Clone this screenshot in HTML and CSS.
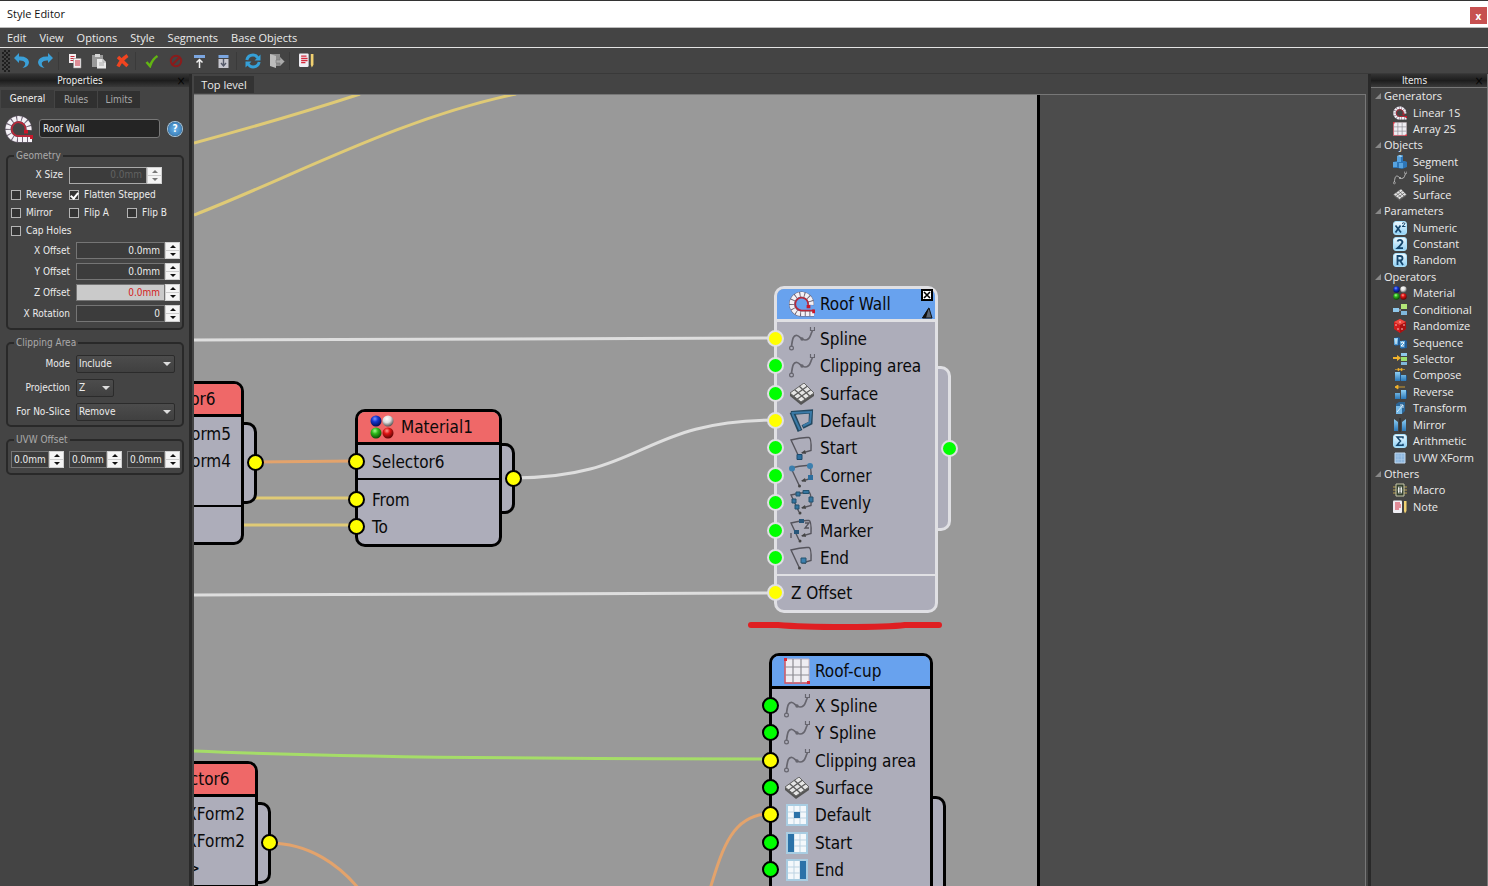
FILE: index.html
```html
<!DOCTYPE html>
<html lang="en">
<head>
<meta charset="utf-8">
<title>Style Editor</title>
<link rel="stylesheet" href="styles.css">
</head>
<body>
<svg class="defs" aria-hidden="true">
  <defs>
    <linearGradient id="gBlue" x1="0" y1="0" x2="0" y2="1"><stop offset="0" stop-color="#8fd0f5"/><stop offset="1" stop-color="#2b78b8"/></linearGradient>
    <linearGradient id="gPale" x1="0" y1="0" x2="0" y2="1"><stop offset="0" stop-color="#f2fbff"/><stop offset="1" stop-color="#8fd0f5"/></linearGradient>
    <radialGradient id="bB" cx=".4" cy=".3" r=".7"><stop offset="0" stop-color="#7d95ff"/><stop offset=".4" stop-color="#1335d0"/><stop offset="1" stop-color="#050c50"/></radialGradient>
    <radialGradient id="bW" cx=".4" cy=".3" r=".7"><stop offset="0" stop-color="#fff"/><stop offset=".5" stop-color="#ddd"/><stop offset="1" stop-color="#555"/></radialGradient>
    <radialGradient id="bG" cx=".4" cy=".3" r=".7"><stop offset="0" stop-color="#a5ff90"/><stop offset=".4" stop-color="#2eb81a"/><stop offset="1" stop-color="#0b4a05"/></radialGradient>
    <radialGradient id="bR" cx=".4" cy=".3" r=".7"><stop offset="0" stop-color="#ff9c90"/><stop offset=".4" stop-color="#e01414"/><stop offset="1" stop-color="#5c0404"/></radialGradient>
    <symbol id="linear" viewBox="0 0 28 28">
      <path d="M27 24.500H12A10.500 10.500 0 1 1 24 15" fill="none" stroke="#6d6272" stroke-width="6"/>
      <path d="M27 24.500H12A10.500 10.500 0 1 1 24 15" fill="none" stroke="#f4f1f6" stroke-width="5" stroke-dasharray="4 1"/>
      <path d="M27 21H13.500A6.900 6.900 0 1 1 20.500 15" fill="none" stroke="#b8283a" stroke-width="1.800"/>
      <path d="M19 15h4v3.500h-4zM25 20h3v4h-3z" fill="#c8182a"/>
    </symbol>
    <symbol id="array" viewBox="0 0 26 26">
      <path d="M1 1H25V25H1z" fill="#efedf2" stroke="#c8b4bc"/><path d="M1 1V25H25" fill="none" stroke="#d05060" stroke-width="1.400"/>
      <path d="M9 1V25M17 1V25M1 9H25M1 17H25" stroke="#8d8b92" stroke-width="1.200"/>
      <path d="M0 0h3v3H0zM23 23h3v3h-3z" fill="#dc2c3a"/>
    </symbol>
    <symbol id="spline" viewBox="0 0 26 24">
      <path d="M2.500 19.500C3.500 11 4.500 8 8 8.500C11 9 12 13 16 13C22 13 21 7 23.500 4" fill="none" stroke="currentColor" stroke-width="1.700"/>
      <circle cx="2.500" cy="21" r="1.900" fill="none" stroke="currentColor" stroke-width="1.200"/><path d="M21.500 0v3.500h4V0" fill="none" stroke="currentColor" stroke-width="1.200"/><circle cx="13" cy="12" r="1.700" fill="currentColor"/>
    </symbol>
    <symbol id="surface" viewBox="0 0 26 22">
      <path d="M1 10L15 1L25 11V13L12 22L1 13z" fill="#555"/><path d="M1 10L15 0L25 10L12 19z" fill="#e5e5e5" stroke="#666"/>
      <path d="M5.700 6.700L16.300 16M10.300 3.300L20.700 13M4.700 13L18.300 3.300M8.300 16L21.700 6.700" stroke="#5c5c5c" stroke-width="1.300"/>
    </symbol>
    <symbol id="pDefault" viewBox="0 0 26 26"><path d="M2 5L22 3.500L21.500 15L13.500 19" fill="none" stroke="#234860" stroke-width="4"/><path d="M3 4L11 23" stroke="#234860" stroke-width="5"/><path d="M2.500 5L22 4L21 14.500L14 18M3.500 6L11 22" fill="none" stroke="#3b7ba8" stroke-width="2"/></symbol>
    <symbol id="pBase" viewBox="0 0 26 26"><path d="M10 22L2 5Q12 2 20 2.500Q22.500 3 22 15.500L13 18" fill="none" stroke="#55545c" stroke-width="1.400"/><path d="M16 15L12 18L17 19z" fill="#444"/></symbol>
    <symbol id="pStart" viewBox="0 0 26 26"><use href="#pBase"/><path d="M8 19.500h5v5H8z" fill="#2c6e9e" stroke="#1c4a6c"/></symbol>
    <symbol id="pCorner" viewBox="0 0 26 26"><use href="#pBase"/><circle cx="3" cy="5.500" r="3" fill="#3b7fae"/><circle cx="21" cy="3" r="3" fill="#3b7fae"/><path d="M19 12h5v5h-5z" fill="#2c6e9e"/><circle cx="10.500" cy="23" r="1.500" fill="#444"/></symbol>
    <symbol id="pEvenly" viewBox="0 0 26 26"><use href="#pBase"/><g fill="#35759f" stroke="#25536f"><path d="M7 2h4v4H7zM14 .5h6v3h-6zM20 7h4v5h-4zM3 9h4v4H3zM6 15h4v4H6z"/></g><circle cx="11" cy="23" r="1.500" fill="#444"/></symbol>
    <symbol id="pMarker" viewBox="0 0 26 26"><use href="#pBase"/><path d="M10 1h5v4h-5zM5 12h5v4H5z" fill="#28567a"/><path d="M2 15V20M16 5h4l-4 5h4" fill="none" stroke="#55545c" stroke-width="1.300"/><circle cx="11" cy="23" r="1.500" fill="#444"/></symbol>
    <symbol id="pEnd" viewBox="0 0 26 26"><use href="#pBase"/><path d="M12 13h5v5h-5z" fill="#3b7fae" stroke="#25536f"/><circle cx="10.500" cy="23" r="1.500" fill="#444"/></symbol>
    <symbol id="gBase" viewBox="0 0 22 22"><path d="M1 1H21V21H1z" fill="#f4f8fb" stroke="#a9cde2" stroke-width="2"/><path d="M8 2V20M14 2V20M2 8H20M2 14H20" stroke="#bdd3e2"/></symbol>
    <symbol id="cDefault" viewBox="0 0 22 22"><use href="#gBase"/><path d="M8 8h6v6H8z" fill="#2b72a8"/></symbol>
    <symbol id="cStart" viewBox="0 0 22 22"><use href="#gBase"/><path d="M2 2h6v18H2z" fill="#2b72a8"/></symbol>
    <symbol id="cEnd" viewBox="0 0 22 22"><use href="#gBase"/><path d="M14 2h6v18h-6z" fill="#2b72a8"/></symbol>
    <symbol id="balls" viewBox="0 0 24 24"><circle cx="6" cy="6" r="5.500" fill="url(#bB)"/><circle cx="18" cy="6" r="5.500" fill="url(#bW)"/><circle cx="6" cy="18" r="5.500" fill="url(#bG)"/><circle cx="18" cy="18" r="5.500" fill="url(#bR)"/></symbol>
    <symbol id="segment" viewBox="0 0 14 14"><path d="M4 1l6-1v6h2l2 1v5l-5 2-4-1-5 0V7l4-1z" fill="#2d76b8"/><path d="M4 1l4 1v5H4zM0 7h4v5H0zM6 8h4v5H6z" fill="#58a4e0"/><path d="M4 1l3-1 3 1-2 1z" fill="#a8daf8"/></symbol>
    <symbol id="badge" viewBox="0 0 14 14"><rect x=".5" y=".5" width="13" height="13" rx="2.500" fill="url(#gPale)" stroke="#a8e0fa"/></symbol>
    <symbol id="numeric" viewBox="0 0 14 14"><use href="#badge"/><path d="M2.500 4.500L8 11.500M7.500 4.500L2.500 11.500" stroke="#15466c" stroke-width="1.700"/><path d="M9 2.500q2-1.500 3 0q0 1-3 3h3.500" fill="none" stroke="#15466c"/></symbol>
    <symbol id="constant" viewBox="0 0 14 14"><use href="#badge"/><path d="M4.500 4.500Q5 2.800 7 2.800T9.500 5Q9 7 4.500 11.200H10" fill="none" stroke="#15466c" stroke-width="1.800"/></symbol>
    <symbol id="random" viewBox="0 0 14 14"><use href="#badge"/><path d="M4.500 12V3H7Q9.500 3 9.500 5.200T7 7.500H4.500M7 7.500L10 12" fill="none" stroke="#15466c" stroke-width="1.800"/></symbol>
    <symbol id="sigma" viewBox="0 0 14 14"><use href="#badge"/><path d="M10 4.500V3H4L7.500 7L4 11.200H10V9.700" fill="none" stroke="#15466c" stroke-width="1.500"/></symbol>
    <symbol id="conditional" viewBox="0 0 14 14"><path d="M0 5h6v4H0z" fill="#8fc8ec"/><path d="M8 1h6v5H8z" fill="#b2e678"/><path d="M8 8h6v4H8z" fill="#7fb8dc"/><path d="M6 7h2" stroke="#ccc"/></symbol>
    <symbol id="dice" viewBox="0 0 14 14"><path d="M7 0l6 3v7l-6 4-6-4V3z" fill="#d01c1c"/><path d="M7 0l6 3-6 3-6-3z" fill="#f04a40"/><path d="M7 6v8l6-4V3z" fill="#a81010"/><g fill="#ffd0cc"><circle cx="7" cy="3" r=".8"/><circle cx="3" cy="6" r=".8"/><circle cx="5" cy="10" r=".8"/><circle cx="9" cy="10" r=".8"/><circle cx="11" cy="6" r=".8"/></g></symbol>
    <symbol id="sequence" viewBox="0 0 14 14"><path d="M1 2l4-1 2 1v7l-5 1zM7 5l5-1 2 1v7l-6 1z" fill="#225c98"/><path d="M1 2h4v7H1zM7 5h5v7H7z" fill="url(#gBlue)"/><path d="M3 3v5M8 7q2-2 3 0l-3 3h3" fill="none" stroke="#fff"/></symbol>
    <symbol id="selector" viewBox="0 0 14 14"><path d="M8 1h6v3H8z" fill="#8fc8ec"/><path d="M8 5h6v4H8z" fill="#9be06e"/><path d="M8 10h6v3H8z" fill="#7fb8dc"/><path d="M0 5h4V3l4 3-4 3V7H0z" fill="#f2b32c"/></symbol>
    <symbol id="compose" viewBox="0 0 14 14"><path d="M2 4h5v9H2zM8 7h5v6H8z" fill="url(#gBlue)"/><path d="M7 4l1 1v7l-1 1zM13 7l1 1v4l-1 1z" fill="#1d5690"/><path d="M2 1.500h4M8 1.500h4M5 0l2 1.500L5 3zM9 0L7 1.500 9 3z" fill="#f2b32c" stroke="#f2b32c" stroke-width=".6"/></symbol>
    <symbol id="reverse" viewBox="0 0 14 14"><path d="M2 8h5v6H2zM8 5h5v9H8z" fill="url(#gBlue)"/><path d="M13 5l1 1v7l-1 1z" fill="#1d5690"/><path d="M2 2h10M5 0L2 2l3 2z" fill="#f2b32c" stroke="#f2b32c" stroke-width=".8"/></symbol>
    <symbol id="transform" viewBox="0 0 14 14"><path d="M3 3l3-2h6v9l-3 3H3z" fill="#2b6596"/><path d="M3 5h6v8H3z" fill="#75b8e6"/><path d="M4 11l6-7M10 4H7M10 4v3" stroke="#d8ecfa" fill="none"/></symbol>
    <symbol id="mirror" viewBox="0 0 14 14"><path d="M1 1l4 3v9H1z" fill="url(#gBlue)"/><path d="M13 1L9 4v9h4z" fill="url(#gBlue)"/><path d="M7 0v14" stroke="#252525"/></symbol>
    <symbol id="uvw" viewBox="0 0 14 14"><path d="M2 2h10v10H2z" fill="#8db6dd" stroke="#c3daf0"/><path d="M2 5h10M2 8.500h10M5 2v10M8.500 2v10" stroke="#a9cae8" stroke-width=".6"/></symbol>
    <symbol id="macro" viewBox="0 0 14 14"><path d="M0 4h14M0 7h14M0 10h14" stroke="#b9a04c"/><path d="M3 1h8v12H3z" fill="#344030" stroke="#c8c8a8"/><path d="M6 3.500q-1.500 3.500 0 7M8 3.500q1.500 3.500 0 7M7 5v4" fill="none" stroke="#fff"/></symbol>
    <symbol id="note" viewBox="0 0 14 14"><rect y=".5" width="9" height="12.500" rx="1" fill="#f0eef4"/><path d="M2 3h5M2 5h6M2 7h6M2 9h4" stroke="#d42a3c" stroke-width="1.200"/><path d="M11 1h2.500v10L12 13.500 11 11z" fill="#f0d070"/></symbol>
  </defs>
</svg>

<header class="titlebar"><h1>Style Editor</h1><button class="winclose" aria-label="Close window">x</button></header>
<nav class="menubar"><button>Edit</button><button>View</button><button>Options</button><button>Style</button><button>Segments</button><button>Base Objects</button></nav>
<div class="toolbar">
  <span class="grip"></span>
  <button aria-label="Undo"><svg width="16" height="16" viewBox="0 0 16 16"><path d="M0 5L5 0V3.500Q14 3 15 9Q15 14 8.500 15Q12 12 11 9.500Q9.500 7 5 7.500V10z" fill="#3ba0d8"/></svg></button>
  <button aria-label="Redo"><svg width="16" height="16" viewBox="0 0 16 16"><path d="M15 5L10 0V3.500Q1 3 0 9Q0 14 6.500 15Q3 12 4 9.500Q5.500 7 10 7.500V10z" fill="#3ba0d8"/></svg></button>
  <i class="sep"></i>
  <button aria-label="Copy"><svg width="16" height="16" viewBox="0 0 16 16"><path d="M2 1h7v9H2z" fill="#f4eef0"/><path d="M3.500 3.500h4M3.500 5.500h4M3.500 7.500h4" stroke="#c82c3c"/><path d="M6.500 5.500h7.500v9.500H6.500z" fill="#f4eef0" stroke="#999" stroke-width=".6"/><path d="M8 8h5M8 10h5M8 12h5" stroke="#c82c3c"/></svg></button>
  <button aria-label="Paste"><svg width="16" height="16" viewBox="0 0 16 16"><path d="M1 2h11v12H1z" fill="#999"/><path d="M4 1h5v3H4z" fill="#d6d6d6"/><path d="M6 6h6l3 3v6.500H6z" fill="#e8e8e8"/><path d="M12 6v3h3M8 10h5M8 12h5" stroke="#aaa" fill="none"/></svg></button>
  <button aria-label="Delete"><svg width="14" height="14" viewBox="0 0 14 14"><path d="M2 3L11.500 12M11.500 1.500Q5 6 2 12.500" stroke="#f04420" stroke-width="3.400" fill="none"/></svg></button>
  <i class="sep"></i>
  <button aria-label="Apply"><svg width="14" height="14" viewBox="0 0 14 14"><path d="M1.500 8L5 12Q7.500 5 12.500 2" stroke="#62b512" stroke-width="2.600" fill="none"/></svg></button>
  <button aria-label="Cancel"><svg width="14" height="14" viewBox="0 0 14 14"><circle cx="7" cy="7" r="5.200" fill="none" stroke="#8a1c1c" stroke-width="2"/><path d="M3.500 10.500L10.500 3.500" stroke="#8a1c1c" stroke-width="2"/></svg></button>
  <button aria-label="Import"><svg width="14" height="14" viewBox="0 0 14 14"><path d="M1 1h11v3H1z" fill="#7ba6e0"/><path d="M6.500 14V6M3.500 8.500L6.500 5.500L9.500 8.500" fill="none" stroke="#eee" stroke-width="1.500"/></svg></button>
  <button aria-label="Export"><svg width="14" height="14" viewBox="0 0 14 14"><path d="M1.500 1h10v3h-10z" fill="#7ba6e0"/><path d="M1.500 5h10v9h-10z" fill="#c8c8d0"/><path d="M6.500 5V11M4 9L6.500 12L9 9" fill="none" stroke="#555a6a" stroke-width="1.400"/></svg></button>
  <i class="sep"></i>
  <button aria-label="Refresh"><svg width="16" height="16" viewBox="0 0 16 16"><path d="M1.800 7Q3 2 8 2Q11 2 13 5M14.200 9Q13 14 8 14Q5 14 3 11" fill="none" stroke="#35a0d8" stroke-width="3"/><path d="M15.500 1.500V7.500H9.500zM.5 14.500V8.500H6.500z" fill="#35a0d8"/></svg></button>
  <button aria-label="Exit"><svg width="16" height="16" viewBox="0 0 16 16"><path d="M1 1h10v12H1z" fill="#8c8c8c"/><path d="M1 1l6 2v12L1 13z" fill="#bcbcbc"/><path d="M7 7h4V4l4.500 4.500L11 13v-3H7z" fill="#aaa" stroke="#777" stroke-width=".6"/></svg></button>
  <i class="sep"></i>
  <button aria-label="Note"><svg width="15" height="15"><use href="#note"/></svg></button>
</div>

<main class="workspace">
  <aside class="dock properties">
    <header class="dockhead"><h2>Properties</h2><button aria-label="Close properties">×</button></header>
    <div class="tabs"><button class="on">General</button><button>Rules</button><button>Limits</button></div>
    <div class="namerow">
      <svg width="28" height="28"><use href="#linear"/></svg>
      <input type="text" aria-label="Name" value="Roof Wall">
      <button class="help" aria-label="Help">?</button>
    </div>
    <fieldset class="geometry">
      <legend>Geometry</legend>
      <div class="field xsize"><label for="xs">X Size</label><span class="spin off"><input id="xs" type="text" value="0.0mm" disabled><span class="steps"><button aria-label="Up"></button><button aria-label="Down"></button></span></span></div>
      <div class="checks">
        <label><input type="checkbox">Reverse</label><label class="wide"><input type="checkbox" checked>Flatten Stepped</label>
        <label><input type="checkbox">Mirror</label><label><input type="checkbox">Flip A</label><label><input type="checkbox">Flip B</label>
        <label><input type="checkbox">Cap Holes</label>
      </div>
      <div class="field"><label for="xo">X Offset</label><span class="spin"><input id="xo" type="text" value="0.0mm"><span class="steps"><button aria-label="Up"></button><button aria-label="Down"></button></span></span></div>
      <div class="field"><label for="yo">Y Offset</label><span class="spin"><input id="yo" type="text" value="0.0mm"><span class="steps"><button aria-label="Up"></button><button aria-label="Down"></button></span></span></div>
      <div class="field"><label for="zo">Z Offset</label><span class="spin driven"><input id="zo" type="text" value="0.0mm"><span class="steps"><button aria-label="Up"></button><button aria-label="Down"></button></span></span></div>
      <div class="field"><label for="xr">X Rotation</label><span class="spin"><input id="xr" type="text" value="0"><span class="steps"><button aria-label="Up"></button><button aria-label="Down"></button></span></span></div>
    </fieldset>
    <fieldset class="clip">
      <legend>Clipping Area</legend>
      <div class="field"><label for="mode">Mode</label><span class="drop"><select id="mode"><option>Include</option></select></span></div>
      <div class="field"><label for="proj">Projection</label><span class="drop short"><select id="proj"><option>Z</option></select></span></div>
      <div class="field"><label for="slice">For No-Slice</label><span class="drop"><select id="slice"><option>Remove</option></select></span></div>
    </fieldset>
    <fieldset>
      <legend>UVW Offset</legend>
      <div class="uvwrow">
        <span class="spin"><input type="text" aria-label="U offset" value="0.0mm"><span class="steps"><button aria-label="Up"></button><button aria-label="Down"></button></span></span>
        <span class="spin"><input type="text" aria-label="V offset" value="0.0mm"><span class="steps"><button aria-label="Up"></button><button aria-label="Down"></button></span></span>
        <span class="spin"><input type="text" aria-label="W offset" value="0.0mm"><span class="steps"><button aria-label="Up"></button><button aria-label="Down"></button></span></span>
      </div>
    </fieldset>
  </aside>

  <section class="graph">
    <div class="leveltabs"><button>Top level</button></div>
    <div class="canvas">
      <div class="sheet"></div>
      <svg class="wires" width="860" height="792" viewBox="194 95 860 792" fill="none" stroke-width="3">
        <g stroke="#dfca76"><path d="M194 143Q290 117 360 94"/><path d="M194 215C290 178 400 118 516 94"/><path d="M250 498H356M240 525H356"/></g>
        <g stroke="#dedede"><path d="M194 340L776 338"/><path d="M513 478C645 478 640 420 776 420"/><path d="M194 595L776 593"/></g>
        <g stroke="#e3a36c"><path d="M255 462L356 461"/><path d="M269 843C310 843 340 866 359 889"/><path d="M710 889C722 850 732 814 770 814"/></g>
        <path d="M194 751C340 757 560 759 770 759" stroke="#a5dd68"/>
        <path d="M751 625H778Q800 627 845 627T905 625H939" stroke="#df1f22" stroke-width="6" stroke-linecap="round"/>
      </svg>

      <article class="node red sel-a">
        <span class="bracket"><b class="port y"></b></span>
        <h3><span>Selector6</span></h3>
        <ul class="rows right"><li>UVW XForm5</li><li>UVW XForm4</li><li class="none">&lt;none&gt;</li></ul>
        <ul class="rows extra"><li>Selector</li></ul>
      </article>

      <article class="node red sel-b">
        <span class="bracket"><b class="port y"></b></span>
        <h3><span>Selector6</span></h3>
        <ul class="rows right"><li>UVW XForm2</li><li>UVW XForm2</li><li class="none">&lt;none&gt;</li></ul>
        <ul class="rows extra"><li>Selector</li></ul>
      </article>

      <article class="node red material">
        <span class="bracket"><b class="port y"></b></span>
        <h3><svg width="24" height="24"><use href="#balls"/></svg><span>Material1</span></h3>
        <ul class="rows one"><li><b class="port y"></b>Selector6</li></ul>
        <ul class="rows extra"><li><b class="port y"></b>From</li><li><b class="port y"></b>To</li></ul>
      </article>

      <article class="node blue picked roofwall">
        <span class="bracket"><b class="port"></b></span>
        <h3><svg width="26" height="26"><use href="#linear"/></svg><span>Roof Wall</span></h3>
        <svg class="corner" width="12" height="32" viewBox="0 0 12 32"><path d="M1 2h10v10H1z" fill="#fff" stroke="#000" stroke-width="2"/><path d="M3 4l6 6M9 4l-6 6" stroke="#000" stroke-width="1.600"/><path d="M1.500 30H11L8 20z" fill="#5a6472" stroke="#111"/><path d="M1 30L8 19L5 30z" fill="#111"/></svg>
        <ul class="rows list">
          <li><b class="port y"></b><svg width="26" height="24"><use href="#spline"/></svg>Spline</li>
          <li><b class="port"></b><svg width="26" height="24"><use href="#spline"/></svg>Clipping area</li>
          <li><b class="port"></b><svg width="26" height="22"><use href="#surface"/></svg>Surface</li>
          <li><b class="port y"></b><svg width="26" height="26"><use href="#pDefault"/></svg>Default</li>
          <li><b class="port"></b><svg width="26" height="26"><use href="#pStart"/></svg>Start</li>
          <li><b class="port"></b><svg width="26" height="26"><use href="#pCorner"/></svg>Corner</li>
          <li><b class="port"></b><svg width="26" height="26"><use href="#pEvenly"/></svg>Evenly</li>
          <li><b class="port"></b><svg width="26" height="26"><use href="#pMarker"/></svg>Marker</li>
          <li><b class="port"></b><svg width="26" height="26"><use href="#pEnd"/></svg>End</li>
        </ul>
        <ul class="rows extra"><li><b class="port y"></b>Z Offset</li></ul>
      </article>

      <article class="node blue roofcup">
        <span class="bracket"></span>
        <h3><svg width="26" height="26"><use href="#array"/></svg><span>Roof-cup</span></h3>
        <ul class="rows list">
          <li><b class="port"></b><svg width="26" height="24"><use href="#spline"/></svg>X Spline</li>
          <li><b class="port"></b><svg width="26" height="24"><use href="#spline"/></svg>Y Spline</li>
          <li><b class="port y"></b><svg width="26" height="24"><use href="#spline"/></svg>Clipping area</li>
          <li><b class="port"></b><svg width="26" height="22"><use href="#surface"/></svg>Surface</li>
          <li><b class="port y"></b><svg width="26" height="22"><use href="#cDefault"/></svg>Default</li>
          <li><b class="port"></b><svg width="26" height="22"><use href="#cStart"/></svg>Start</li>
          <li><b class="port"></b><svg width="26" height="22"><use href="#cEnd"/></svg>End</li>
          <li><svg width="26" height="22"><use href="#gBase"/></svg></li>
          <li></li>
        </ul>
      </article>
    </div>
  </section>

  <aside class="dock items">
    <header class="dockhead"><h2>Items</h2><button aria-label="Close items">×</button></header>
    <ul class="tree">
      <li class="group">Generators</li>
      <li><svg width="14" height="14"><use href="#linear"/></svg>Linear 1S</li>
      <li><svg width="14" height="14"><use href="#array"/></svg>Array 2S</li>
      <li class="group">Objects</li>
      <li><svg width="14" height="14"><use href="#segment"/></svg>Segment</li>
      <li><svg width="14" height="14"><use href="#spline"/></svg>Spline</li>
      <li><svg width="14" height="14"><use href="#surface"/></svg>Surface</li>
      <li class="group">Parameters</li>
      <li><svg width="14" height="14"><use href="#numeric"/></svg>Numeric</li>
      <li><svg width="14" height="14"><use href="#constant"/></svg>Constant</li>
      <li><svg width="14" height="14"><use href="#random"/></svg>Random</li>
      <li class="group">Operators</li>
      <li><svg width="14" height="14"><use href="#balls"/></svg>Material</li>
      <li><svg width="14" height="14"><use href="#conditional"/></svg>Conditional</li>
      <li><svg width="14" height="14"><use href="#dice"/></svg>Randomize</li>
      <li><svg width="14" height="14"><use href="#sequence"/></svg>Sequence</li>
      <li><svg width="14" height="14"><use href="#selector"/></svg>Selector</li>
      <li><svg width="14" height="14"><use href="#compose"/></svg>Compose</li>
      <li><svg width="14" height="14"><use href="#reverse"/></svg>Reverse</li>
      <li><svg width="14" height="14"><use href="#transform"/></svg>Transform</li>
      <li><svg width="14" height="14"><use href="#mirror"/></svg>Mirror</li>
      <li><svg width="14" height="14"><use href="#sigma"/></svg>Arithmetic</li>
      <li><svg width="14" height="14"><use href="#uvw"/></svg>UVW XForm</li>
      <li class="group">Others</li>
      <li><svg width="14" height="14"><use href="#macro"/></svg>Macro</li>
      <li><svg width="14" height="14"><use href="#note"/></svg>Note</li>
    </ul>
  </aside>
</main>
</body>
</html>
```
FILE: styles.css
```css
* { box-sizing: border-box; }
body {
  margin: 0; height: 100vh; overflow: hidden;
  display: flex; flex-direction: column;
  background: #444; color: #ececec;
  font: 11px/16px "Open Sans", "Noto Sans", sans-serif;
}
button, input, select { font: inherit; color: inherit; margin: 0; padding: 0; border: 0; background: none; border-radius: 0; }
h1, h2, h3, ul { margin: 0; padding: 0; font: inherit; list-style: none; }
.defs { position: absolute; width: 0; height: 0; }

.titlebar { display: flex; align-items: center; justify-content: space-between; height: 28px; padding: 0 1px 0 7px; background: #fff; color: #111; border-top: 1px solid #333; border-bottom: 1px solid #bbb; }
.winclose { width: 17px; height: 17px; margin-top: 3px; background: #c75050; color: #fff; line-height: 14px; font-weight: 700; font-size: 10px; }
.menubar { display: flex; gap: 13px; height: 20px; padding: 0 7px; border-bottom: 1px solid #e4e4e4; }
.toolbar { display: flex; align-items: center; height: 26px; padding-left: 2px; border-bottom: 1px solid #393939; }
.toolbar button { width: 24px; height: 24px; display: grid; place-items: center; }
.grip { width: 8px; height: 22px; background: repeating-conic-gradient(#1f1f1f 0 25%, #444 0 50%) 0 0 / 4px 4px; }
.sep { width: 5px; height: 18px; border-left: 1px solid #3a3a3a; }

.workspace { flex: 1; min-height: 0; display: flex; }
.dock { display: flex; flex-direction: column; background: #444; }
.properties { width: 192px; border-right: 3px solid #292929; font: 10px/14px "DejaVu Sans Condensed", "DejaVu Sans", sans-serif; }
.items { width: 120px; border-left: 3px solid #292929; border-right: 1px solid #777; }
.dockhead { display: flex; align-items: center; height: 13px; background: linear-gradient(#333, #1d1d1d 50%, #3a3a3a); font: 10px/12px "DejaVu Sans Condensed", "DejaVu Sans", sans-serif; }
.dockhead h2 { flex: 1; padding-right: 13px; text-align: center; }
.dockhead button { width: 16px; color: #050505; font-size: 12px; line-height: 12px; }

.tabs { display: flex; gap: 1px; height: 19px; margin: 2px 1px 0; align-items: end; }
.tabs button { width: 42px; height: 17px; background: #303030; color: #a8a8a8; }
.tabs .on { width: 53px; height: 18px; background: #393939; color: #f2f2f2; }
.namerow { display: flex; align-items: center; height: 41px; padding: 0 5px; }
.namerow input { width: 121px; height: 19px; margin-left: 6px; padding: 0 3px; background: #242424; border: 1px solid #777; border-radius: 3px; }
.help { width: 14px; height: 14px; margin-left: 8px; border-radius: 50%; background: radial-gradient(#6cb4ea, #286ca8); box-shadow: 0 0 0 1px #a8c8e0; color: #fff; font-weight: 700; line-height: 14px; }

fieldset { min-width: 0; margin: 0 5px 6px 6px; padding: 2px 2px 3px 3px; border: 2px solid #292929; border-radius: 5px; }
legend { margin-left: 3px; padding: 0 2px; color: #aaa; }
.geometry { padding-top: 3px; padding-bottom: 4px; }
.field { display: flex; align-items: center; gap: 6px; height: 21px; }
.field > label { width: 59px; text-align: right; white-space: nowrap; }
.xsize { height: 20px; padding-bottom: 2px; }
.xsize > label { width: 52px; }
.spin { display: flex; width: 104px; height: 17px; }
.xsize .spin { width: 93px; }
.spin input { flex: 1; min-width: 0; padding-right: 4px; border: 1px solid #757575; background: #3c3c3c; text-align: right; }
.spin.off input { border-color: #aaa; color: #626262; }
.spin.driven input { background: #cacaca; color: #d42020; }
.steps { display: flex; flex-direction: column; width: 15px; background: #f4f4f4; border: 1px solid #d0d0d0; }
.steps button { flex: 1; display: grid; place-items: center; min-height: 0; }
.steps button::before { content: ""; border: 3px solid transparent; border-top-width: 0; border-bottom: 3px solid #111; }
.steps button + button { border-top: 1px solid #ccc; }
.steps button + button::before { border-bottom-width: 0; border-top: 3px solid #111; }
.off .steps button::before { border-bottom-color: #777; }
.off .steps button + button::before { border-top-color: #777; }
.checks { display: grid; grid-template-columns: 58px 58px 1fr; grid-auto-rows: 18px; }
.checks .wide { grid-column: span 2; }
.checks label { display: flex; align-items: center; gap: 5px; white-space: nowrap; }
.checks input { appearance: none; flex: none; width: 10px; height: 10px; border: 1px solid #b4b4b4; background: #333; display: grid; place-items: center; }
.checks input:checked::before { content: ""; width: 3px; height: 6px; margin-bottom: 2px; border: solid #fff; border-width: 0 2px 2px 0; transform: rotate(40deg); }
.clip { padding-bottom: 1px; }
.clip .field { height: 23px; margin-bottom: 1px; }
.drop { position: relative; width: 99px; }
.drop.short { width: 38px; }
.drop select { appearance: none; display: block; width: 100%; height: 18px; padding-left: 2px; background: linear-gradient(#4c4c4c, #404040); border: 1px solid #2b2b2b; border-radius: 2px; }
.drop::after { content: ""; position: absolute; right: 4px; top: 7px; border: 4px solid transparent; border-top-color: #ddd; border-bottom-width: 0; pointer-events: none; }
.uvwrow { display: flex; gap: 5px; padding: 2px 0; }
.uvwrow .spin { flex: 1; width: auto; min-width: 0; }
.uvwrow .spin input { padding: 0 0 0 2px; text-align: left; }

.graph { flex: 1; min-width: 0; display: flex; flex-direction: column; padding: 0 2px; }
.leveltabs { height: 20px; padding-top: 2px; }
.leveltabs button { width: 60px; height: 17px; background: #333; }
.canvas { position: relative; flex: 1; overflow: hidden; background: #4c4c4c; border-top: 1px solid #777; border-right: 1px solid #777; color: #0a0a0a; }
.sheet { width: 846px; height: 100%; background: #999; border-right: 3px solid #000; }
.wires { position: absolute; left: 0; top: 0; }

/* Graph nodes sit freely on the canvas */
.node { --line: #000; position: absolute; width: 147px; border: 3px solid var(--line); border-radius: 10px; background: #adadba; font: 17px/24px "DejaVu Sans Condensed", "DejaVu Sans", sans-serif; white-space: nowrap; }
.picked { --line: #e0e0e4; }
.node h3 { display: flex; align-items: center; gap: 5px; height: 33px; padding-left: 12px; border-bottom: 3px solid var(--line); border-radius: 7px 7px 0 0; }
.red h3 { background: #ef6868; }
.blue h3 { background: #68a2ee; }
.rows { display: grid; grid-auto-rows: 1fr; }
.rows li { position: relative; display: flex; align-items: center; gap: 5px; padding-left: 14px; }
.rows svg { color: #66656e; flex: none; }
.list li { padding-left: 12px; }
.extra { border-top: 2px solid var(--line); }
.port { position: absolute; left: -10px; top: 50%; width: 17px; height: 17px; margin-top: -9px; border: 2px solid var(--line); border-radius: 50%; background: #0f0; }
.port.y { background: #ff0; }
.bracket { position: absolute; left: calc(100% + 3px); width: 13px; border: 3px solid var(--line); border-left: 0; border-radius: 0 10px 10px 0; background: #adadba; }
.bracket .port { left: auto; right: -10px; }
.right li { justify-content: flex-end; padding-right: 10px; }
.right .none { padding-right: 55px; }

.roofwall { left: 580px; top: 191px; width: 164px; }
.roofwall .list { height: 252px; padding: 3px 0 2px; }
.roofwall .extra { height: 36px; }
.roofwall .bracket { top: 77px; height: 165px; }
.corner { position: absolute; right: 2px; top: -1px; }
.roofcup { left: 575px; top: 558px; width: 164px; }
.roofcup .list { height: 252px; padding: 3px 0 2px; }
.roofcup .bracket { top: 140px; height: 150px; }
.material { left: 161px; top: 314px; }
.material h3 { gap: 7px; }
.material .rows { height: 33px; }
.material .extra { height: 66px; padding: 6px 0 4px; }
.material .bracket { top: 31px; height: 71px; }
.sel-a { left: -97px; top: 286px; }
.sel-b { left: -83px; top: 666px; }
.sel-a h3, .sel-b h3 { padding-left: 43px; }
.sel-a .right, .sel-b .right { height: 88px; padding: 3px 0; }
.sel-a .extra, .sel-b .extra { height: 37px; }
.sel-a .bracket, .sel-b .bracket { top: 38px; height: 82px; }

.tree { display: grid; grid-auto-rows: 1fr; height: 428px; border-top: 1px solid #777; }
.tree li { display: flex; align-items: center; gap: 6px; padding-left: 22px; white-space: nowrap; }
.tree li.group { padding-left: 4px; gap: 3px; }
.group::before { content: ""; border: 3px solid transparent; border-right-color: #888; border-bottom-color: #888; }
.tree svg { color: #c0c0c0; }
```
